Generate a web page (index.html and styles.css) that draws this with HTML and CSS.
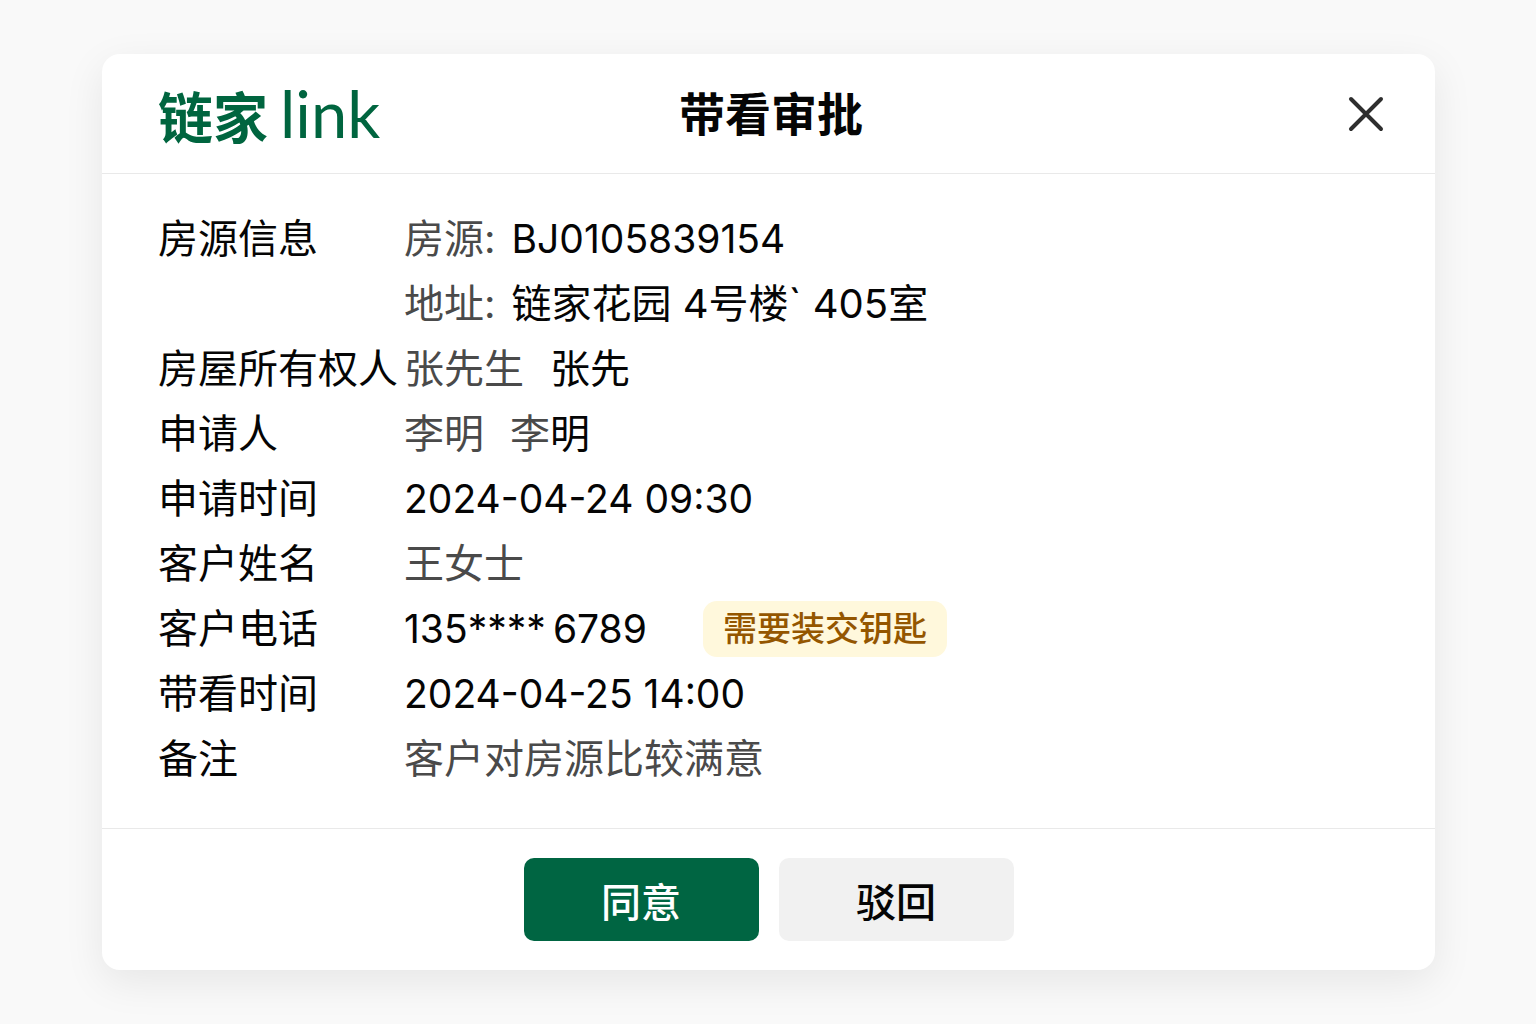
FILE: index.html
```html
<!DOCTYPE html>
<html lang="zh-CN">
  <head>
    <meta charset="UTF-8" />
    <meta name="viewport" content="width=device-width, initial-scale=1.0" />
    <title>带看审批</title>
    <link rel="stylesheet" href="styles.css">
  </head>
  <body>
    <main class="modal">
      <header class="modal-header">
        <div class="logo">链家<span class="logo-en">link</span></div>
        <h1 class="title">带看审批</h1>
        <button class="close" type="button" aria-label="关闭">
          <svg width="36" height="36" viewBox="0 0 36 36" fill="none" stroke="#2e2e2e" stroke-width="4" stroke-linecap="round">
            <path d="M3 3L33 33M33 3L3 33" />
          </svg>
        </button>
      </header>

      <dl class="details">
        <dt>房源信息</dt>
        <dd><span class="muted">房源:</span><span class="num">BJ0105839154</span></dd>
        <dd><span class="muted">地址:</span><span>链家花园 4号楼` 405室</span></dd>

        <dt>房屋所有权人</dt>
        <dd class="names"><span class="muted">张先生</span><span>张先</span></dd>

        <dt>申请人</dt>
        <dd class="names"><span class="muted">李明</span><span><span class="muted">李</span>明</span></dd>

        <dt>申请时间</dt>
        <dd class="num">2024-04-24 09:30</dd>

        <dt>客户姓名</dt>
        <dd class="muted">王女士</dd>

        <dt>客户电话</dt>
        <dd class="phone"><span class="num">135****&thinsp;6789</span><span class="tag">需要装交钥匙</span></dd>

        <dt>带看时间</dt>
        <dd class="num">2024-04-25 14:00</dd>

        <dt>备注</dt>
        <dd class="muted">客户对房源比较满意</dd>
      </dl>

      <footer class="modal-footer">
        <button class="btn primary" type="button">同意</button>
        <button class="btn" type="button">驳回</button>
      </footer>
    </main>
  </body>
</html>
```
FILE: styles.css
```css
* {
  box-sizing: border-box;
}
body {
  margin: 0;
  padding: 54px 101px 54px 102px;
  background: #f9f9f9;
  color: #050505;
  font-family: Inter, "Noto Sans CJK SC", sans-serif;
  font-size: 40px;
}
.modal {
  background: white;
  border-radius: 18px;
  box-shadow: 0 12px 40px rgba(0, 0, 0, 0.08);
}
.modal-header {
  display: grid;
  grid-template-columns: 1fr auto 1fr;
  align-items: center;
  height: 120px;
  padding: 0 51px 0 56px;
  border-bottom: 1px solid #e9e9e9;
}
.logo {
  display: flex;
  align-items: baseline;
  gap: 12px;
  padding-top: 4px;
  color: #00653f;
  font-size: 55px;
  font-weight: 700;
  line-height: 72px;
}
.logo-en {
  font-family: Lato, sans-serif;
  font-size: 65px;
  font-weight: 400;
}
.title {
  margin: 0;
  font-size: 46px;
  font-weight: 700;
  line-height: 64px;
}
.close {
  display: flex;
  justify-self: end;
  padding: 0;
  border: none;
  background: none;
  cursor: pointer;
}
.details {
  display: grid;
  grid-template-columns: 246px 1fr;
  grid-auto-rows: 65px;
  margin: 0;
  padding: 32px 56px 37px;
  line-height: 65px;
  white-space: nowrap;
}
dt {
  grid-column: 1;
}
dd {
  grid-column: 2;
  display: flex;
  align-items: center;
  gap: 16px;
  margin: 0;
}
.names {
  gap: 26px;
}
.phone {
  gap: 56px;
}
.num {
  font-size: 39px;
}
.muted {
  color: #4a4a4a;
}
.tag {
  padding: 0 20px;
  border-radius: 14px;
  background: #fff8dc;
  color: #945600;
  font-size: 34px;
  font-weight: 500;
  line-height: 56px;
}
.modal-footer {
  display: flex;
  justify-content: center;
  gap: 20px;
  padding: 29px 0;
  border-top: 1px solid #e9e9e9;
}
.btn {
  width: 235px;
  height: 83px;
  border: none;
  border-radius: 10px;
  background: #f1f1f1;
  color: #050505;
  font-family: inherit;
  font-size: 40px;
  font-weight: 500;
  cursor: pointer;
}
.primary {
  background: #006542;
  color: white;
}
```
